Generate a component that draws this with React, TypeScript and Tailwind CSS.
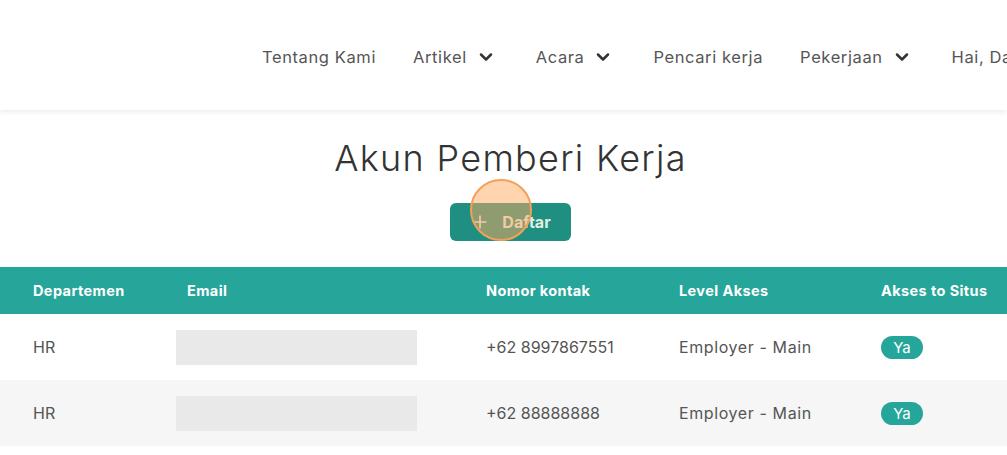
import { ChevronDown, Plus } from 'lucide-react'

const NAV = [
  { label: 'Tentang Kami', menu: false },
  { label: 'Artikel', menu: true },
  { label: 'Acara', menu: true },
  { label: 'Pencari kerja', menu: false },
  { label: 'Pekerjaan', menu: true },
  { label: 'Hai, Dani', menu: true },
]

const ROWS = [
  { dept: 'HR', phone: '+62 8997867551', level: 'Employer - Main' },
  { dept: 'HR', phone: '+62 88888888', level: 'Employer - Main' },
]

const COLS = 'grid grid-cols-[187px_299px_193px_202px_1fr]'

export default function App() {
  return (
    <div className="w-[1007px] h-[455px] overflow-hidden bg-white font-['Inter','Noto_Sans',sans-serif] text-[#555]">
      <header className="h-[110px] flex items-center overflow-hidden whitespace-nowrap shadow-[0_3px_4px_rgba(0,0,0,0.06)] relative z-10">
        <nav className="ml-[262px] flex items-center gap-[37px] text-[16.5px] tracking-[0.6px] text-[#555] pt-[4px]">
          {NAV.map((n) => (
            <span key={n.label} className={`flex items-center gap-[9px] ${n.menu ? 'pr-[3px]' : ''}`}>
              {n.label}
              {n.menu && <ChevronDown className="w-[20px] h-[20px] text-[#333]" strokeWidth={3} />}
            </span>
          ))}
        </nav>
      </header>

      <main className="pt-[25px]">
        <div className="pl-[14px]">
          <h1 className="text-center text-[36px] font-light text-[#333] tracking-[1.3px] leading-[46px]">
            Akun Pemberi Kerja
          </h1>
          <div className="flex justify-center mt-[22px]">
            <div className="relative">
              <button className="h-[38px] w-[121px] rounded-[6px] bg-[#1e8f80] flex items-center justify-center gap-[12px] text-[#e2eee4] font-bold text-[16px]">
                <Plus className="w-[20px] h-[20px]" strokeWidth={2} />
                Daftar
              </button>
              <span className="absolute left-[20px] top-[-24px] w-[62px] h-[62px] rounded-full border-2 border-[#f3a058] bg-[#ffa860]/50" />
            </div>
          </div>
        </div>

        <div className="mt-[26px]">
          <div className={`${COLS} h-[47px] items-center bg-[#26a69a] text-white font-bold text-[14.5px] tracking-[0.4px]`}>
            <span className="pl-[33px]">Departemen</span>
            <span>Email</span>
            <span>Nomor kontak</span>
            <span>Level Akses</span>
            <span>Akses to Situs</span>
          </div>
          {ROWS.map((r, i) => (
            <div
              key={i}
              className={`${COLS} h-[66px] items-center text-[16px] text-[#555] ${i % 2 ? 'bg-[#f6f6f6]' : 'bg-white'}`}
            >
              <span className="pl-[33px]">{r.dept}</span>
              <span className="ml-[-11px] w-[241px] h-[35px] bg-[#e8e9e8]" />
              <span>{r.phone}</span>
              <span className="tracking-[0.6px]">{r.level}</span>
              <span>
                <span className="inline-flex items-center justify-center w-[42px] h-[23px] rounded-full bg-[#26a69a] text-white text-[15px]">
                  Ya
                </span>
              </span>
            </div>
          ))}
        </div>
      </main>
    </div>
  )
}
